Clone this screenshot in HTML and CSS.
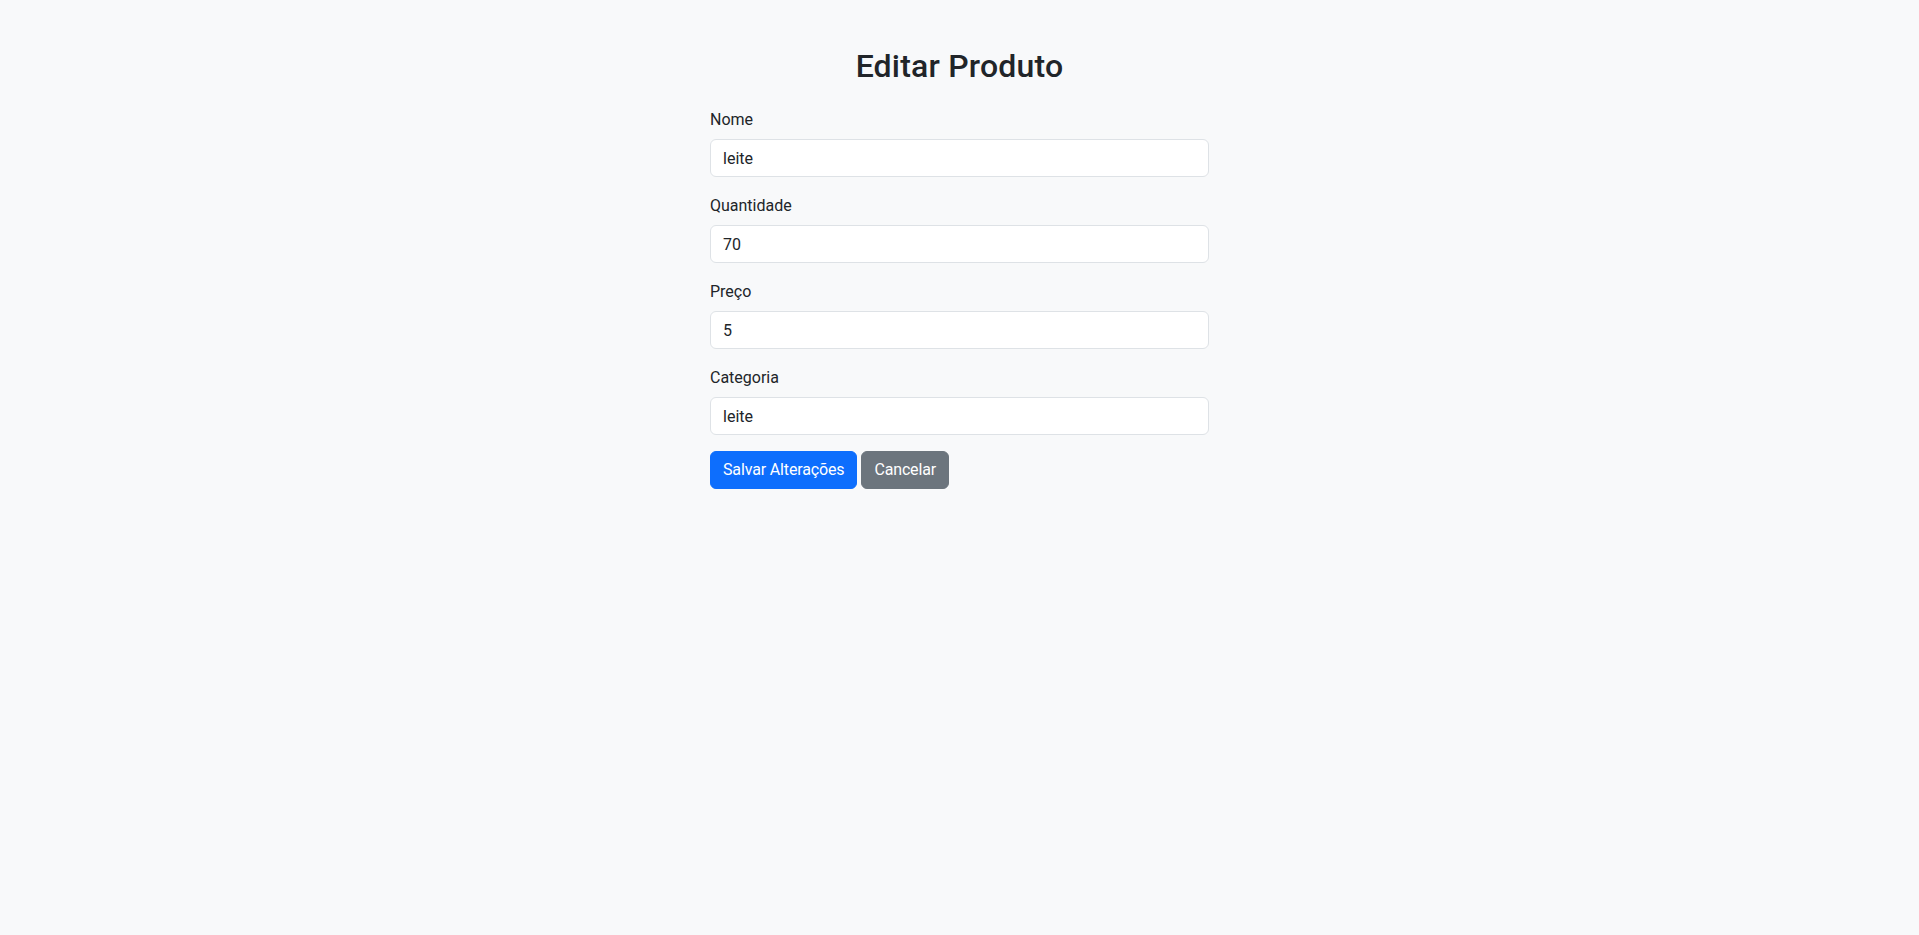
FILE: index.html
```html
<!DOCTYPE html>
<html lang="pt-BR">
<head>
<meta charset="utf-8">
<title>Editar Produto</title>
<link rel="stylesheet" href="styles.css">
</head>
<body>
<main class="container">
  <h2 class="title">Editar Produto</h2>
  <form class="form">
    <div class="field">
      <label class="label" for="nome">Nome</label>
      <input class="input" id="nome" type="text" value="leite">
    </div>
    <div class="field">
      <label class="label" for="quantidade">Quantidade</label>
      <input class="input" id="quantidade" type="text" value="70">
    </div>
    <div class="field">
      <label class="label" for="preco">Preço</label>
      <input class="input" id="preco" type="text" value="5">
    </div>
    <div class="field">
      <label class="label" for="categoria">Categoria</label>
      <input class="input" id="categoria" type="text" value="leite">
    </div>
    <div class="actions">
      <button type="submit" class="btn btn-primary">Salvar Alterações</button>
      <button type="button" class="btn btn-secondary">Cancelar</button>
    </div>
  </form>
</main>
</body>
</html>
```

FILE: styles.css
```css
* { box-sizing: border-box; }

html, body {
  margin: 0;
  padding: 0;
}

body {
  background: #f8f9fa;
  color: #212529;
  font-family: Roboto, "Liberation Sans", sans-serif;
  font-size: 16px;
  line-height: 1.5;
}

.container {
  width: 499px;
  margin: 0 auto;
  padding-top: 47px;
}

.title {
  margin: 0 0 22px;
  font-size: 32px;
  font-weight: 500;
  line-height: 1.2;
  letter-spacing: 0.2px;
  text-align: center;
  color: #212529;
}

.field {
  margin-bottom: 16px;
}

.label {
  display: inline-block;
  padding-top: 1px;
  margin-bottom: 7px;
  line-height: 24px;
}

.input {
  display: block;
  width: 100%;
  height: 38px;
  padding: 6px 12px;
  font-family: inherit;
  font-size: 16px;
  line-height: 24px;
  color: #212529;
  background: #fff;
  border: 1px solid #dee2e6;
  border-radius: 6px;
  outline: none;
}

.actions {
  display: flex;
  gap: 4px;
}

.btn {
  height: 38px;
  padding: 6px 12px;
  font-family: inherit;
  font-size: 16px;
  line-height: 24px;
  letter-spacing: -0.15px;
  color: #fff;
  border: 1px solid transparent;
  border-radius: 6px;
  cursor: pointer;
}

.btn-primary {
  background: #0d6efd;
  border-color: #0d6efd;
}

.btn-secondary {
  background: #6c757d;
  border-color: #6c757d;
}
```
